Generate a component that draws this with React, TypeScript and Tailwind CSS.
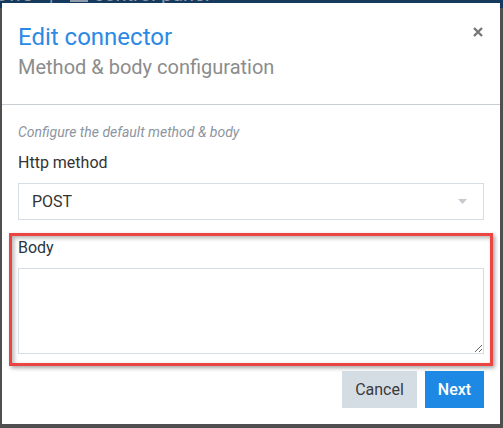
import React from "react";

export default function App() {
  return (
    <div className="relative w-[503px] h-[428px] overflow-hidden bg-[#4f4f4f] font-['Roboto',sans-serif]">
      <div className="h-[8px] overflow-hidden bg-[#163a5e]">
        <div className="-mt-[18px] flex items-center gap-[16px] pl-[0px] text-[20px] leading-[24px] text-[#8d9bab] whitespace-nowrap">
          <span className="-ml-[4px]">ows</span>
          <span>|</span>
          <span className="flex items-center gap-[6px]">
            <span className="inline-block w-[18px] h-[16px] bg-[#8d9bab]"></span>
            control panel
          </span>
        </div>
      </div>

      <div className="absolute left-[2px] top-[3px] w-[498px] bg-white">
        {/* Header */}
        <div className="px-4 pt-[20px] pb-[25px] border-b border-[#c9ced3]">
          <div className="flex items-start justify-between">
            <div className="text-[24px] leading-[28px] text-[#2a8ae6]">Edit connector</div>
            <svg className="mt-[4px] mr-[1px]" width="10" height="10" viewBox="0 0 10 10">
              <path d="M1 1 L9 9 M9 1 L1 9" stroke="#777" strokeWidth="2.4" strokeLinecap="butt" />
            </svg>
          </div>
          <div className="mt-[4px] text-[20px] leading-[24px] text-[#8c8c8c]">Method &amp; body configuration</div>
        </div>

        {/* Body */}
        <div className="px-4 pt-[17px] pb-[16px]">
          <div className="text-[14px] leading-[20px] italic text-[#8d95a0]">Configure the default method &amp; body</div>
          <div className="mt-[9px] mb-[8px] text-[16px] leading-[24px] text-[#333]">Http method</div>
          <div className="h-[37px] border border-[#d6dde4] flex items-center justify-between pl-[13px] pr-[16px]">
            <span className="text-[16px] leading-[24px] text-[#333]">POST</span>
            <svg width="9" height="5" viewBox="0 0 9 5">
              <path d="M0 0 L9 0 L4.5 5 Z" fill="#c4cad0" />
            </svg>
          </div>

          <div className="mt-[13px] -mx-[9px] px-[6px] pb-[9px] border-[3px] border-[#ec4343] shadow-[2px_2px_4px_rgba(0,0,0,0.35),inset_2px_2px_4px_rgba(0,0,0,0.3)]">
            <div className="mb-[8px] text-[16px] leading-[24px] text-[#2b3540]">Body</div>
            <textarea className="block w-full h-[86px] border border-[#d6dde4] resize-y outline-none"></textarea>
          </div>

          <div className="mt-[5px] flex justify-end gap-[8px]">
            <button className="h-[37px] w-[75px] bg-[#d5dde4] text-[16px] text-[#3a3a3a]">Cancel</button>
            <button className="h-[37px] w-[59px] bg-[#1e88e5] text-[16px] font-medium text-white">Next</button>
          </div>
        </div>
      </div>
    </div>
  );
}
